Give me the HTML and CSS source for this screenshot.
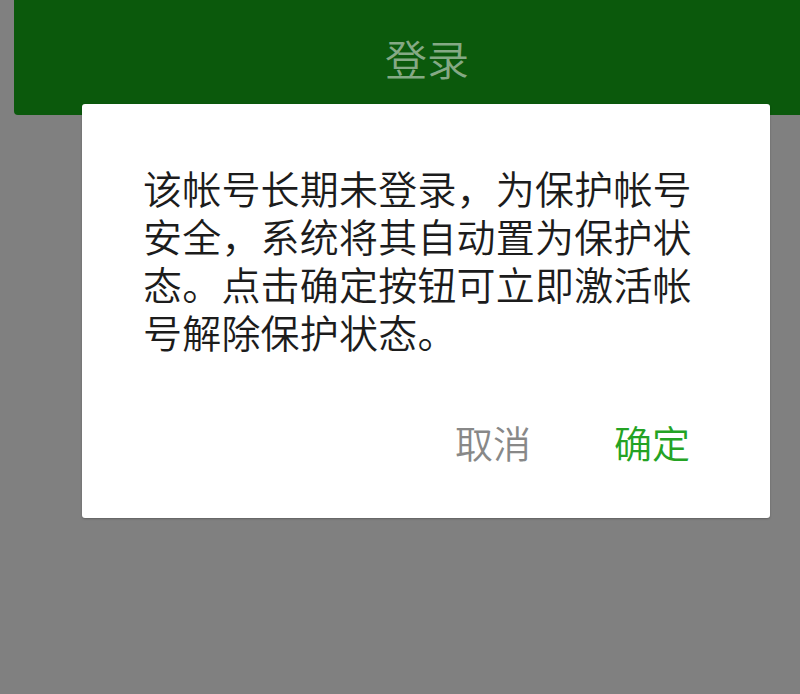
FILE: index.html
```html
<!DOCTYPE html>
<html lang="zh-CN">
<head>
<meta charset="utf-8">
<title>登录</title>
<link rel="stylesheet" href="styles.css">
</head>
<body>
<div class="page">
  <div class="login-btn">登录</div>
  <div class="dialog">
    <p class="message">该帐号长期未登录，为保护帐号安全，系统将其自动置为保护状态。点击确定按钮可立即激活帐号解除保护状态。</p>
    <div class="actions">
      <span class="btn cancel">取消</span>
      <span class="btn ok">确定</span>
    </div>
  </div>
</div>
</body>
</html>
```
FILE: styles.css
```css
html, body {
  margin: 0;
  padding: 0;
  width: 800px;
  height: 694px;
  overflow: hidden;
  background: #808080;
  font-family: "Noto Sans CJK SC", "Noto Sans", sans-serif;
}
.page {
  position: relative;
  width: 800px;
  height: 694px;
  overflow: hidden;
}
.login-btn {
  margin-left: 14px;
  width: 826px;
  height: 115px;
  background: #0b590c;
  border-radius: 0 0 4px 4px;
  color: #85a985;
  font-size: 42px;
  font-weight: 350;
  line-height: 116px;
  text-align: center;
}
.dialog {
  position: absolute;
  left: 82px;
  top: 104px;
  width: 688px;
  height: 414px;
  box-sizing: border-box;
  background: #fff;
  border-radius: 3px;
  box-shadow: 0 1px 2px rgba(0,0,0,0.25);
  padding: 59px 40px 0 61px;
}
.message {
  margin: 0;
  color: #1c1c1c;
  font-size: 39px;
  font-weight: 350;
  line-height: 48px;
  width: 562px;
  letter-spacing: 0.2px;
}
.actions {
  display: flex;
  justify-content: flex-end;
  gap: 83px;
  margin-top: 63px;
  padding-right: 40px;
}
.btn {
  font-size: 38px;
  font-weight: 350;
  line-height: 48px;
}
.cancel { color: #888; }
.ok { color: #24a324; }
```
